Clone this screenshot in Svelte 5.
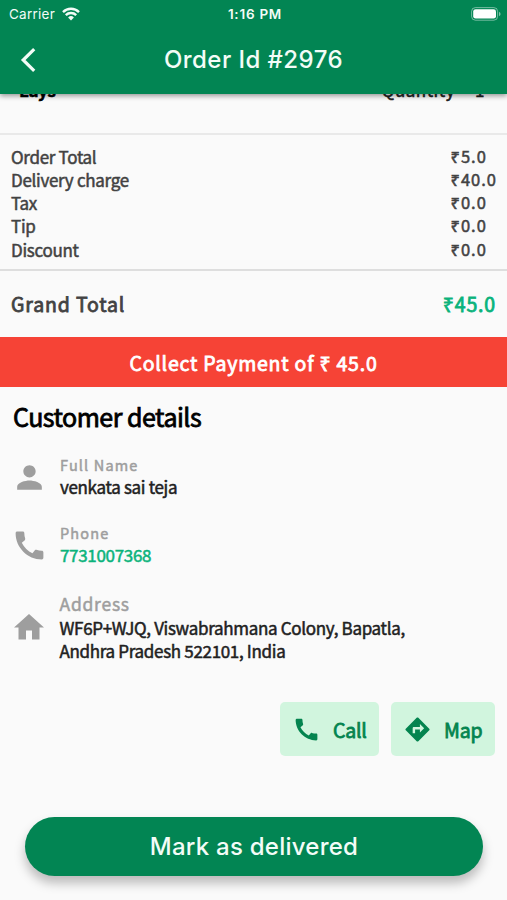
<script lang="ts">
  const charges = [
    { label: 'Order Total', amount: '₹5.0' },
    { label: 'Delivery charge', amount: '₹40.0' },
    { label: 'Tax', amount: '₹0.0' },
    { label: 'Tip', amount: '₹0.0' },
    { label: 'Discount', amount: '₹0.0' },
  ];

  const icons = {
    person: 'M12 12c2.21 0 4-1.79 4-4s-1.79-4-4-4-4 1.79-4 4 1.79 4 4 4zm0 2c-2.67 0-8 1.34-8 4v2h16v-2c0-2.66-5.33-4-8-4z',
    call: 'M20.01 15.38c-1.23 0-2.42-.2-3.53-.56-.35-.12-.74-.03-1.01.24l-1.57 1.97c-2.83-1.35-5.48-3.9-6.89-6.83l1.95-1.66c.27-.28.35-.67.24-1.02-.37-1.11-.56-2.3-.56-3.53 0-.54-.45-.99-.99-.99H4.19C3.65 3 3 3.24 3 3.99 3 13.28 10.73 21 20.01 21c.71 0 .99-.63.99-1.18v-3.45c0-.54-.45-.99-.99-.99z',
    home: 'M10 20v-6h4v6h5v-8h3L12 3 2 12h3v8z',
    directions: 'M21.71 11.29l-9-9c-.39-.39-1.02-.39-1.41 0l-9 9c-.39.39-.39 1.02 0 1.41l9 9c.39.39 1.02.39 1.41 0l9-9c.39-.38.39-1.01 0-1.41zM14 14.5V12h-4v3H8v-4c0-.55.45-1 1-1h5V7.5l3.5 3.5-3.5 3.5z',
  };
</script>

<div class="screen">
  <header class="app-bar">
    <div class="status-bar">
      <div class="carrier">
        <span>Carrier</span>
        <svg class="wifi" viewBox="0 0 18 14" aria-hidden="true">
          <path d="M1 5.1a11.4 11.4 0 0 1 16 0M3.8 8.1a7.4 7.4 0 0 1 10.4 0" fill="none" stroke="currentColor" stroke-width="2.4" />
          <path d="M9 13.4 6.1 10.5a4.1 4.1 0 0 1 5.8 0z" fill="currentColor" />
        </svg>
      </div>
      <span class="time">1:16 PM</span>
      <svg class="battery" viewBox="0 0 30 14" aria-hidden="true">
        <rect x=".6" y=".6" width="26" height="12.6" rx="3.8" fill="none" stroke="#fff" stroke-opacity=".45" />
        <rect x="2.2" y="2.2" width="22.8" height="9.4" rx="2.4" fill="#fff" />
        <path d="M28 4.8v4.4q1.6-.7 1.6-2.2T28 4.8z" fill="#fff" fill-opacity=".5" />
      </svg>
    </div>
    <div class="title-bar">
      <button class="back" aria-label="Back">
        <svg viewBox="0 0 16 24" aria-hidden="true">
          <path d="M14.2 1.2 3.2 12l11 10.8" fill="none" stroke="currentColor" stroke-width="3.2" />
        </svg>
      </button>
      <h1>Order Id #2976</h1>
    </div>
  </header>

  <main>
    <section class="item">
      <strong>Lays</strong>
      <span class="quantity"><span>Quantity</span><span>1</span></span>
    </section>

    <section class="charges">
      <div class="labels">
        {#each charges as charge}
          <span>{charge.label}</span>
        {/each}
      </div>
      <div class="amounts">
        {#each charges as charge}
          <span>{charge.amount}</span>
        {/each}
      </div>
    </section>

    <section class="grand-total">
      <span>Grand Total</span>
      <span class="total-amount">₹45.0</span>
    </section>

    <div class="collect">Collect Payment of ₹ 45.0</div>

    <section class="customer">
      <h2>Customer details</h2>

      <div class="detail">
        <svg class="detail-icon" viewBox="0 0 24 24" aria-hidden="true"><path d={icons.person} /></svg>
        <div>
          <div class="label">Full Name</div>
          <div class="value">venkata sai teja</div>
        </div>
      </div>

      <div class="detail phone">
        <svg class="detail-icon" viewBox="0 0 24 24" aria-hidden="true"><path d={icons.call} /></svg>
        <div>
          <div class="label">Phone</div>
          <div class="value">7731007368</div>
        </div>
      </div>

      <div class="detail address">
        <svg class="detail-icon" viewBox="0 0 24 24" aria-hidden="true"><path d={icons.home} /></svg>
        <div>
          <div class="label">Address</div>
          <div class="value">WF6P+WJQ, Viswabrahmana Colony, Bapatla,<br />Andhra Pradesh 522101, India</div>
        </div>
      </div>
    </section>

    <div class="actions">
      <button class="action call">
        <svg viewBox="0 0 24 24" aria-hidden="true"><path d={icons.call} /></svg>
        <span>Call</span>
      </button>
      <button class="action map">
        <svg viewBox="0 0 24 24" aria-hidden="true"><path d={icons.directions} /></svg>
        <span>Map</span>
      </button>
    </div>

    <button class="deliver">Mark as delivered</button>
  </main>
</div>

<style>
  :global(body) {
    margin: 0;
    background: #fafafa;
  }

  .screen {
    width: 507px;
    height: 900px;
    overflow: hidden;
    background: #fafafa;
    color: #424242;
    font-family: "Noto Sans CJK SC", "Noto Sans", sans-serif;
    font-weight: 400;
    display: flex;
    flex-direction: column;
  }

  /* slightly emboldened regular weight */
  main { -webkit-text-stroke: 0.5px currentColor; }

  button {
    border: 0;
    padding: 0;
    background: none;
    color: inherit;
    font: inherit;
  }

  svg { display: block; }

  /* App bar */
  .app-bar {
    position: relative;
    z-index: 1;
    flex: none;
    height: 94px;
    background: #028553;
    color: #f3fcf7;
    box-shadow: 0 2px 5px rgba(0, 0, 0, 0.4);
    font-family: Inter, sans-serif;
  }

  .status-bar {
    display: grid;
    grid-template-columns: 1fr auto 1fr;
    align-items: center;
    height: 27px;
    padding: 0 6px 0 9px;
    font-size: 13.5px;
  }

  .carrier {
    display: flex;
    align-items: center;
    gap: 7px;
    font-weight: 400;
    letter-spacing: 0.25px;
  }

  .wifi {
    width: 18px;
    height: 14px;
  }

  .time {
    font-weight: 600;
    letter-spacing: 0.75px;
  }

  .battery {
    width: 30px;
    height: 14px;
    justify-self: end;
  }

  .title-bar {
    display: grid;
    grid-template-columns: 60px 1fr 60px;
    align-items: center;
    height: 66px;
  }

  .back {
    width: 16px;
    height: 24px;
    margin-left: 19.5px;
  }

  .back svg {
    width: 16px;
    height: 24px;
  }

  h1 {
    margin: 0;
    font-size: 24px;
    font-weight: 500;
    line-height: 30px;
    letter-spacing: 0.45px;
    text-align: center;
    white-space: nowrap;
  }

  /* Order summary */
  .item {
    display: flex;
    justify-content: space-between;
    height: 39px;
    padding: 0 22px 0 19px;
    border-bottom: 2px solid #e9e9e9;
    font-size: 17px;
    line-height: 24px;
  }

  .item strong {
    margin-top: -16px;
    color: #000;
    letter-spacing: -0.4px;
  }

  .quantity {
    display: flex;
    gap: 20px;
    margin-top: -16px;
    color: #212121;
    letter-spacing: 0.5px;
  }

  .charges {
    display: flex;
    justify-content: space-between;
    height: 124px;
    padding: 9.5px 10px 0 11px;
    border-bottom: 2px solid #dedede;
    font-size: 17px;
    line-height: 23.25px;
  }

  .labels,
  .amounts {
    display: flex;
    flex-direction: column;
  }

  .labels { letter-spacing: -0.3px; }

  .amounts {
    font-size: 16.5px;
    letter-spacing: 1px;
  }

  .grand-total {
    display: flex;
    justify-content: space-between;
    height: 66.5px;
    padding: 0 11px;
    font-size: 19.5px;
    line-height: 65px;
    letter-spacing: 0.85px;
    -webkit-text-stroke-width: 0.8px;
  }

  .total-amount { color: #0bb37b; }

  .collect {
    height: 50px;
    background: #f64336;
    color: #fff;
    font-size: 19.5px;
    line-height: 51px;
    letter-spacing: 0.78px;
    text-align: center;
    -webkit-text-stroke-width: 0.8px;
  }

  /* Customer */
  .customer { padding: 0 13px; }

  h2 {
    margin: 0;
    padding-top: 11px;
    color: #000;
    font-size: 25px;
    font-weight: 400;
    line-height: 36px;
    letter-spacing: -0.5px;
    -webkit-text-stroke-width: 0.8px;
  }

  .detail {
    display: flex;
    align-items: center;
    gap: 12.5px;
    height: 44px;
    margin-top: 20.5px;
  }

  .detail-icon {
    flex: none;
    width: 37px;
    height: 37px;
    margin: 1px 0 0 -2.5px;
    fill: #9e9e9e;
  }

  .label {
    color: #9e9e9e;
    font-size: 14.5px;
    line-height: 20px;
    letter-spacing: 1.15px;
  }

  .value {
    color: #212121;
    font-size: 17px;
    line-height: 23px;
    letter-spacing: -0.32px;
    white-space: nowrap;
  }

  .phone { margin-top: 24px; }
  .phone .value { color: #0bb37b; }

  .address {
    height: 70px;
    margin-top: 25px;
  }

  .address .detail-icon {
    width: 36px;
    margin-top: 2px;
    margin-right: 0.5px;
  }

  .address .label {
    font-size: 17.5px;
    line-height: 24px;
    letter-spacing: 0.75px;
  }

  /* Buttons */
  .actions {
    display: flex;
    justify-content: flex-end;
    gap: 12px;
    margin-top: 40.5px;
    padding-right: 12px;
  }

  .action {
    display: flex;
    align-items: center;
    height: 54px;
    border-radius: 5px;
    background: #d1f5de;
    color: #04844f;
    font-size: 19.5px;
    letter-spacing: -0.2px;
    -webkit-text-stroke-width: 0.8px;
  }

  .action svg {
    width: 29px;
    height: 29px;
    fill: currentColor;
  }

  .action span {
    padding-top: 2px;
    line-height: 28px;
  }

  .call {
    gap: 12px;
    width: 99px;
    padding-left: 12px;
  }

  .map {
    gap: 12px;
    width: 104px;
    padding-left: 12px;
  }

  .deliver {
    display: block;
    width: 458px;
    height: 59px;
    margin: 61px auto 0 25px;
    border-radius: 30px;
    background: #028553;
    box-shadow: 0 7px 11px rgba(0, 0, 0, 0.26);
    color: #f3fcf7;
    font-family: Inter, sans-serif;
    font-size: 24px;
    font-weight: 500;
    letter-spacing: 0.25px;
    -webkit-text-stroke: 0;
  }
</style>
